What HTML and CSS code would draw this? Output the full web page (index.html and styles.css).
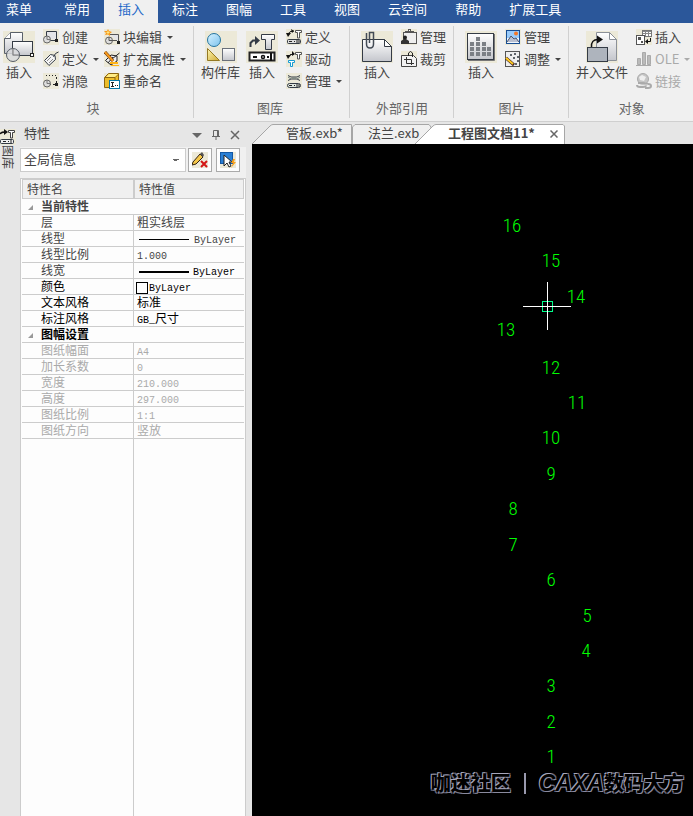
FILE: index.html
```html
<!DOCTYPE html>
<html lang="zh-CN">
<head>
<meta charset="utf-8">
<title>工程图文档11</title>
<link rel="stylesheet" href="styles.css">
</head>
<body>
<nav class="menu">
  <button class="menu-item menu-root">菜单</button>
  <button class="menu-item">常用</button>
  <button class="menu-item active">插入</button>
  <button class="menu-item">标注</button>
  <button class="menu-item">图幅</button>
  <button class="menu-item">工具</button>
  <button class="menu-item">视图</button>
  <button class="menu-item">云空间</button>
  <button class="menu-item">帮助</button>
  <button class="menu-item">扩展工具</button>
</nav>

<div class="ribbon">
  <section class="group group-first">
    <div class="tools">
      <button class="big">
        <svg width="32" height="32" viewBox="0 0 32 32"><defs><linearGradient id="g" x1="0" y1="0" x2="0" y2="1"><stop offset="0" stop-color="#fff"/><stop offset="1" stop-color="#c4c6cc"/></linearGradient></defs><rect width="32" height="32" fill="#ece9d8"/><path d="M1.500 22.500V7.500L7.500 1.500H19.500V22.500Z" fill="url(#g)" stroke="#5a616a"/><path d="M1.500 7.500H7.500V1.500" fill="#fff" stroke="#5a616a"/><rect x="9.500" y="10.500" width="20" height="14" fill="url(#g)" stroke="#343b45"/><circle cx="10" cy="24" r="6.500" fill="#d9dadd" fill-opacity=".85" stroke="#555c66"/><path d="M10 17v7h6" fill="none" stroke="#777"/><rect x="27.500" y="22.500" width="3" height="3" fill="#fff" stroke="#222"/></svg>
        <span>插入</span>
      </button>
      <div class="col">
        <button class="small"><svg width="16" height="16" viewBox="0 0 16 16"><rect width="16" height="16" fill="#ece9d8"/><path d="M3.500 9V2.500H13.500V11" fill="#e4e5e8" stroke="#343b45"/><path d="M7 11.500H12" stroke="#343b45"/><circle cx="4" cy="10.500" r="3.500" fill="#ddd" stroke="#666"/><path d="M4 7v3.500h3" stroke="#777" fill="none"/><rect x="12" y="10" width="3" height="3" fill="#222"/></svg>创建</button>
        <button class="small"><svg width="16" height="16" viewBox="0 0 16 16"><rect width="16" height="16" fill="#ece9d8"/><path d="M1.500 9.500L7.500 3.500L12 4.500L12.500 8.500L6 14.500Z" fill="#f5f5f5" stroke="#343b45"/><path d="M4 10l4-4M6 12l4-4" stroke="#888"/><path d="M10.500 6Q12 1.500 15.500 1" fill="none" stroke="#343b45"/></svg>定义<i class="arrow"></i></button>
        <button class="small"><svg width="16" height="16" viewBox="0 0 16 16"><rect width="16" height="16" fill="#ece9d8"/><path d="M3 2.500H14" stroke="#222" stroke-dasharray="1 2"/><path d="M13.500 4V10M6 11.500H12" stroke="#222" stroke-dasharray="2 2"/><circle cx="4" cy="10.500" r="3.500" fill="#ddd" stroke="#666"/><path d="M4 7v3.500h3" stroke="#777" fill="none"/><rect x="12" y="10" width="3" height="3" fill="#222"/></svg>消隐</button>
      </div>
      <div class="col">
        <button class="small"><svg width="16" height="16" viewBox="0 0 16 16"><rect width="16" height="16" fill="#ece9d8"/><path d="M6 5.500H14.500V13" fill="#e4e5e8" stroke="#555"/><circle cx="5" cy="11.500" r="3.500" fill="#ddd" stroke="#666"/><path d="M5 8v3.500h8" fill="none" stroke="#555"/><path d="M4 0L5 2L8 3L6 4.500L6 7L4 5.500L1 6L2 4L0 2L3 2Z" fill="#f79a1b"/><path d="M4 2v3M2.500 3.500h3" stroke="#ffe682"/><rect x="13" y="12" width="3" height="3" fill="#222"/></svg>块编辑<i class="arrow"></i></button>
        <button class="small"><svg width="16" height="16" viewBox="0 0 16 16"><rect width="16" height="16" fill="#ece9d8"/><path d="M1.500 9.500L7 4L13 5L13 10L7 14Z" fill="#eee" stroke="#222"/><path d="M8 8L15.500 2M4 12L9 6" stroke="#222"/><path d="M1 1L9 10" stroke="#69320a" stroke-width="3"/><path d="M1 1L9 10" stroke="#f79a1b" stroke-width="2"/><path d="M6 11h8v2h-8zM7 14h8v1h-8z" fill="#ffb315"/></svg>扩充属性<i class="arrow"></i></button>
        <button class="small"><svg width="16" height="16" viewBox="0 0 16 16"><rect width="16" height="16" fill="#ece9d8"/><path d="M.5 4.500L4.500.5H14.500V10L11 14.500H.5Z" fill="#edbd2a" stroke="#8d6610"/><path d="M1 4.500H11V14M11 4.500L14.500 1" fill="none" stroke="#8d6610"/><path d="M2 4L5 1H14L11 4Z" fill="#ffec85"/><rect x="5.500" y="7.500" width="10" height="8" fill="#fff" stroke="#0877a6"/><path d="M7 9.500h3M8.500 9.500v4M7 13.500h3M11 12.500h1M13 12.500h1" stroke="#222" fill="none"/></svg>重命名</button>
      </div>
    </div>
    <h2>块</h2>
  </section>

  <section class="group group-library">
    <div class="tools">
      <button class="big">
        <svg width="32" height="32" viewBox="0 0 32 32"><defs><linearGradient id="blue" x1="0" y1="0" x2="1" y2="1"><stop offset="0" stop-color="#d9f3ff"/><stop offset="1" stop-color="#7cc2ed"/></linearGradient><linearGradient id="gold" x1="0" y1="0" x2="1" y2="1"><stop offset="0" stop-color="#fff7ae"/><stop offset="1" stop-color="#cfaa38"/></linearGradient></defs><rect width="32" height="32" fill="#ece9d8"/><circle cx="9" cy="9" r="6.500" fill="url(#blue)" stroke="#27759f"/><path d="M2.500 17.500V29.500H14.500Z" fill="url(#gold)" stroke="#957923"/><rect x="17.500" y="17.500" width="12" height="12" fill="url(#g)" stroke="#6a707a"/></svg>
        <span>构件库</span>
      </button>
      <button class="big">
        <svg width="32" height="32" viewBox="0 0 32 32"><rect width="32" height="32" fill="#ece9d8"/><path d="M4.500 16V12L7 9.500H11" fill="none" stroke="#343b45" stroke-width="2"/><path d="M9 5L14 9.500L9 14Z" fill="#343b45"/><path d="M15.500 3.500H28.500V8.500H25.500V18.500H19.500V8.500H15.500Z" fill="url(#g)" stroke="#343b45"/><rect x="3.500" y="21.500" width="25" height="8" fill="#fff" stroke="#222" stroke-width="2"/><path d="M7 26h4M21 26h2" stroke="#111" stroke-width="2"/><circle cx="17" cy="26" r="1.500" fill="none" stroke="#111" stroke-width="1.500"/><path d="M25 22v8" stroke="#111" stroke-width="2"/></svg>
        <span>插入</span>
      </button>
      <div class="col">
        <button class="small"><svg width="16" height="16" viewBox="0 0 16 16"><rect width="16" height="16" fill="#ece9d8"/><path d="M2 5Q3 2 8 2" fill="none" stroke="#111" stroke-width="1"/><path d="M0 4h5L2 8ZM5 0L8 2L6 4Z" fill="#111"/><path d="M9.500 1.500H15.500V3.500H13.500V9H11.500V3.500H9.500Z" fill="#fff" stroke="#555"/><rect x="1.500" y="10.500" width="13" height="4" rx="1" fill="#ddd" stroke="#343b45"/><path d="M3 12.500h3M8 12.500h1M11 11v3M13 11v3" stroke="#222"/></svg>定义</button>
        <button class="small"><svg width="16" height="16" viewBox="0 0 16 16"><rect width="16" height="16" fill="#ece9d8"/><path d="M2 6Q3 3 8 3" fill="none" stroke="#111"/><path d="M0 4h5L2 8ZM6 0L9 3L6 5Z" fill="#111"/><path d="M9.500 1.500H15.500V3.500H13.500V8H11.500V3.500H9.500Z" fill="#fff" stroke="#555"/><path d="M2.500 9.500H8.500V11.500H6.500V15.500H4.500V11.500H2.500Z" fill="#fff" stroke="#159bd2"/></svg>驱动</button>
        <button class="small"><svg width="16" height="16" viewBox="0 0 16 16"><rect width="16" height="16" fill="#ece9d8"/><path d="M2 2.500L5 4L11 4L14 2.500M2 7.500L5 6H11L14 7.500" fill="none" stroke="#343b45" stroke-width="1"/><path d="M2 4L5 6M14 4L11 6M6 5h4" stroke="#718078"/><rect x="1.500" y="10.500" width="13" height="4" rx="2" fill="#dfe6df" stroke="#343b45"/><path d="M3 12.500h3M8 12.500h1M11 11v3M13 11v3" stroke="#222"/></svg>管理<i class="arrow"></i></button>
      </div>
    </div>
    <h2>图库</h2>
  </section>

  <section class="group group-reference">
    <div class="tools">
      <button class="big">
        <svg width="32" height="32" viewBox="0 0 32 32"><rect width="32" height="32" fill="#ece9d8"/><path d="M1.500 8.500H23.500L30.500 15.500V30.500H1.500Z" fill="url(#g)" stroke="#343b45"/><path d="M23.500 8.500V15.500H30.500Z" fill="#fff" stroke="#343b45"/><path d="M5.500 2V13Q5.500 17 9 17Q12.500 17 12.500 13V1.500H8.500V12" fill="none" stroke="#444c56" stroke-width="1.500"/></svg>
        <span>插入</span>
      </button>
      <div class="col">
        <button class="small"><svg width="16" height="16" viewBox="0 0 16 16"><rect width="16" height="16" fill="#ece9d8"/><rect x="2.500" y="3.500" width="13" height="11" fill="#eee" stroke="#555"/><path d="M4 4h9V2h-3V0H7v2H4Z" fill="#555"/><rect x="8" y="1" width="1" height="1" fill="#fff"/><circle cx="4" cy="8.500" r="2" fill="#222"/><path d="M0 15v-3l3-2h2l3 2v3Z" fill="#333"/></svg>管理</button>
        <button class="small"><svg width="16" height="16" viewBox="0 0 16 16"><rect width="16" height="16" fill="#ece9d8"/><path d="M.5 4.500H12.500L15.500 7.500V15.500H.5Z" fill="#f2f2f2" stroke="#444"/><path d="M7.500 5V2Q9.500-1 11.500 2V6" fill="none" stroke="#222"/><path d="M5.500 6V12.500H13M3 8.500H10.500V14" fill="none" stroke="#333"/></svg>裁剪</button>
      </div>
    </div>
    <h2>外部引用</h2>
  </section>

  <section class="group group-image">
    <div class="tools">
      <button class="big">
        <svg width="32" height="32" viewBox="0 0 32 32"><rect width="32" height="32" fill="#ece9d8"/><rect x="2.500" y="2.500" width="26" height="26" fill="url(#g)" stroke="#343b45" stroke-width="1"/><path d="M3 29.500H29.500V3" fill="none" stroke="#777"/><g fill="#7b7f85"><path d="M11 6h4v4h-4zM5 11h4v4h-4zM11 11h4v4h-4zM17 11h4v4h-4zM5 16h4v4h-4zM11 16h4v4h-4zM17 16h4v4h-4zM22 16h4v4h-4zM5 21h4v4h-4zM11 21h4v4h-4zM17 21h4v4h-4zM22 21h4v4h-4z"/></g></svg>
        <span>插入</span>
      </button>
      <div class="col">
        <button class="small"><svg width="16" height="16" viewBox="0 0 16 16"><rect width="16" height="16" fill="#ece9d8"/><rect x="1.500" y="1.500" width="13" height="13" fill="#9acbfa" stroke="#174d93"/><path d="M2 9h12v5H2Z" fill="#eff7ff"/><path d="M2 13L6 7L9 10L11 9L14 13" fill="#b9bfd0" stroke="#4b536c"/><circle cx="11" cy="4.500" r="2" fill="#f57727"/></svg>管理</button>
        <button class="small"><svg width="16" height="16" viewBox="0 0 16 16"><rect x=".5" y=".5" width="14" height="15" fill="#eee" stroke="#555"/><path d="M5 3h2v2H5zM9 2h2v2H9zM12 5h2v2h-2zM8 6h2v2H8zM12 9h2v2h-2zM10 12h2v2h-2z" fill="#60646a"/><path d="M1 7L9 14" stroke="#422" stroke-width="3"/><path d="M1 7L8 13" stroke="#ffcb20" stroke-width="2"/></svg>调整<i class="arrow"></i></button>
      </div>
    </div>
    <h2>图片</h2>
  </section>

  <section class="group group-object">
    <div class="tools">
      <button class="big">
        <svg width="32" height="32" viewBox="0 0 32 32"><rect width="32" height="32" fill="#ece9d8"/><path d="M10.500 1.500H23.500L30.500 8.500V29.500H10.500Z" fill="url(#g)" stroke="#8b9098"/><path d="M23.500 1.500V8.500H30.500Z" fill="#fff" stroke="#8b9098"/><rect x="1.500" y="16.500" width="20" height="14" fill="#aeb4bd" stroke="#343b45"/><path d="M5.500 16Q5 8.500 12 8.500" fill="none" stroke="#111" stroke-width="1.500"/><path d="M11 4.500L17 8.500L11 12.500Z" fill="#111"/></svg>
        <span>并入文件</span>
      </button>
      <div class="col">
        <button class="small"><svg width="16" height="16" viewBox="0 0 16 16"><rect width="16" height="16" fill="#ece9d8"/><rect x="6.500" y="1.500" width="9" height="6" fill="#fff" stroke="#777"/><path d="M7 2.500h8M9.500 2v5M12.500 2v5M7 4.500h8" stroke="#888"/><rect x=".5" y="6.500" width="8" height="9" fill="#fff" stroke="#555"/><path d="M2 8h3v3H2zM5 12h2v2H5z" fill="#555"/><path d="M14.500 9V12.500H11" fill="none" stroke="#111" stroke-width="1"/><path d="M12 10v5L9 12.500Z" fill="#111"/></svg>插入</button>
        <button class="small" disabled><svg width="16" height="16" viewBox="0 0 16 16"><path d="M1.500 7.500h3v6h-3zM6.500 1.500h3v12h-3zM11.500 4.500h3v9h-3z" fill="#bbb" stroke="#aaa"/><path d="M0 14.500h15" stroke="#aaa"/></svg>OLE<i class="arrow"></i></button>
        <button class="small" disabled><svg width="16" height="16" viewBox="0 0 16 16"><circle cx="7" cy="6" r="5.500" fill="#c5c5c5" stroke="#aaa"/><path d="M3 4l3-2l4 2l-2 4L4 7ZM8 9l4-3" fill="#eee"/><path d="M2 10h5q3 0 3 2t-3 2H4q-3 0-3-2M8 11h4q3 0 3 2t-3 2H9" fill="none" stroke="#aaa" stroke-width="2"/><path d="M4 12h8" stroke="#ddd"/></svg>链接</button>
      </div>
    </div>
    <h2>对象</h2>
  </section>
</div>

<main class="workspace">
  <aside class="dock">
    <svg width="16" height="16" viewBox="0 0 16 16"><rect width="16" height="16" fill="#ece9d8"/><path d="M0 5Q1 3 5 3" fill="none" stroke="#111" stroke-width="1.500"/><path d="M4 0L8 3L4 6Z" fill="#111"/><path d="M8.500 1.500H14.500V3.500H12.500V9H10.500V3.500H8.500Z" fill="#fff" stroke="#444"/><rect x=".5" y="10.500" width="13" height="4" rx="1" fill="#eee" stroke="#343b45"/><path d="M3 12.500h3M8 12.500h1M11 11v3" stroke="#222"/></svg>
    <button class="dock-label">图库</button>
  </aside>

  <section class="panel">
    <header class="panel-head">
      <h1>特性</h1>
      <button class="tool" aria-label="选项"><svg width="10" height="10" viewBox="0 0 10 10"><path d="M0 3H10L5 8Z" fill="#666"/></svg></button>
      <button class="tool" aria-label="固定"><svg width="10" height="10" viewBox="0 0 10 10"><path d="M2.500 6V.5H7.500V6M1 6.500H9M5 7V10M6.500 1V6" fill="none" stroke="#666"/></svg></button>
      <button class="tool" aria-label="关闭面板"><svg width="10" height="10" viewBox="0 0 10 10"><path d="M1 1L9 9M9 1L1 9" stroke="#666" stroke-width="1.500"/></svg></button>
    </header>
    <div class="filter">
      <select aria-label="对象选择"><option>全局信息</option></select>
      <button class="square" aria-label="清除选择"><svg width="16" height="16" viewBox="0 0 16 16"><rect width="16" height="16" fill="#ece9d8"/><path d="M1 10L8 2L11 5L4 12L0 13Z" fill="#f5c748" stroke="#332211"/><path d="M8 2L10 0L12 3L11 5Z" fill="#555"/><path d="M9 9L15 15M15 9L9 15" stroke="#d31616" stroke-width="2"/></svg></button>
      <button class="square" aria-label="快速选择"><svg width="16" height="16" viewBox="0 0 16 16"><rect width="16" height="16" fill="#ece9d8"/><rect x=".5" y=".5" width="12" height="11" fill="#2a7fd4" stroke="#1458a4"/><path d="M4 3V14L7 11L9 15L11 14L9 10H12Z" fill="#fff" stroke="#222"/><path d="M13 7L11 11H13L11 16L16 10H14L15 7Z" fill="#f9a11c"/></svg></button>
    </div>
    <div class="grid">
      <table>
        <colgroup><col class="name-col"><col></colgroup>
        <thead><tr><th>特性名</th><th>特性值</th></tr></thead>
        <tbody class="current">
          <tr class="section"><th colspan="2">当前特性</th></tr>
          <tr><td>层</td><td>粗实线层</td></tr>
          <tr><td>线型</td><td><span class="line"></span><span class="latin">ByLayer</span></td></tr>
          <tr><td>线型比例</td><td><span class="latin">1.000</span></td></tr>
          <tr><td>线宽</td><td class="dark"><span class="line thick"></span><span class="latin">ByLayer</span></td></tr>
          <tr class="dark"><td>颜色</td><td class="color"><span class="swatch"></span><span class="latin">ByLayer</span></td></tr>
          <tr class="dark"><td>文本风格</td><td>标准</td></tr>
          <tr class="dark"><td>标注风格</td><td><span class="latin">GB_</span>尺寸</td></tr>
          <tr class="section dark"><th colspan="2">图幅设置</th></tr>
        </tbody>
        <tbody class="sheet">
          <tr><td>图纸幅面</td><td><span class="latin">A4</span></td></tr>
          <tr><td>加长系数</td><td><span class="latin">0</span></td></tr>
          <tr><td>宽度</td><td><span class="latin">210.000</span></td></tr>
          <tr><td>高度</td><td><span class="latin">297.000</span></td></tr>
          <tr><td>图纸比例</td><td><span class="latin">1:1</span></td></tr>
          <tr><td>图纸方向</td><td>竖放</td></tr>
        </tbody>
      </table>
      <div class="rest"></div>
    </div>
  </section>

  <section class="document">
    <div class="tabs">
      <button class="tab slanted"><svg class="shape" width="101" height="20" viewBox="0 0 101 20"><path d="M0 20L18 2Q19.500.5 21 .5H99.500V20" fill="#f0f0f0" stroke="#a6a6a6"/></svg><span>管板.exb*</span></button>
      <button class="tab plain"><svg class="shape" width="82" height="20" viewBox="0 0 82 20"><path d="M.5 20V3L3 .5H77L79 3V20" fill="#f0f0f0" stroke="#a6a6a6"/></svg><span>法兰.exb</span></button>
      <div class="tab current-tab"><svg class="shape" width="151" height="20" viewBox="0 0 151 20"><path d="M0 20L18 2Q19.500.5 21 .5H148L149.500 2V20" fill="#fff" stroke="#a6a6a6"/></svg><button class="tab-name">工程图文档11*</button><button class="close" aria-label="关闭文档"><svg width="8" height="8" viewBox="0 0 8 8"><path d="M.5.5L7.500 7.500M7.500.5L.5 7.500" stroke="#666" stroke-width="1.500"/></svg></button></div>
    </div>
    <div class="canvas">
      <svg class="drawing">
        <g class="numbers">
          <text x="260" y="88">16</text>
          <text x="299" y="123">15</text>
          <text x="324" y="159">14</text>
          <text x="254" y="192">13</text>
          <text x="299" y="230">12</text>
          <text x="325" y="265">11</text>
          <text x="299" y="300">10</text>
          <text x="299" y="336">9</text>
          <text x="261" y="371">8</text>
          <text x="261" y="407">7</text>
          <text x="299" y="442">6</text>
          <text x="335" y="478">5</text>
          <text x="334" y="513">4</text>
          <text x="299" y="548">3</text>
          <text x="299" y="584">2</text>
          <text x="299" y="619">1</text>
        </g>
        <rect x="290.500" y="157.500" width="10" height="10" fill="none" stroke="#00ff8c"/>
        <path d="M271 162.500H319M295.500 138V186" stroke="#fff"/>
      </svg>
      <p class="mark">咖迷社区<span class="bar"></span><em>CAXA</em>数码大方</p>
    </div>
  </section>
</main>
</body>
</html>
```

FILE: styles.css
```css
* {
  box-sizing: border-box;
}

body {
  margin: 0;
  min-height: 100vh;
  display: flex;
  flex-direction: column;
  background: #e6e6e6;
  color: #444;
  font: 13px/18px "Noto Sans CJK SC", sans-serif;
}

button {
  margin: 0;
  padding: 0;
  border: 0;
  background: none;
  color: inherit;
  font: inherit;
  white-space: nowrap;
}

svg {
  display: block;
  flex: none;
}

h1,
h2,
p {
  margin: 0;
  font-size: 13px;
  font-weight: 400;
}

/* Menu bar */
.menu {
  display: flex;
  height: 23px;
  background: #2b579a;
  color: #fff;
}

.menu-item {
  padding: 0 14px 5px;
  line-height: 16px;
}

.menu-root {
  padding: 0 18px 5px 6px;
}

.menu-item.active {
  background: #f0f0f0;
  color: #1e68c8;
}

/* Ribbon */
.ribbon {
  display: flex;
  height: 99px;
  padding: 3px 0;
  background: #f0f0f0;
  border-bottom: 1px solid #cfcfcf;
}

.group {
  display: flex;
  flex-direction: column;
  justify-content: space-between;
  padding: 2px 7px 1px 8px;
  border-right: 1px solid #d0d0d0;
}

.group-first {
  padding-left: 0;
}

.group-library {
  padding-left: 4px;
}

.group-object {
  padding-left: 4px;
}

.group h2 {
  color: #666;
  text-align: center;
}

.tools {
  display: flex;
}

.big {
  display: flex;
  flex-direction: column;
  align-items: center;
  padding: 3px 3px 0;
}

.col {
  display: flex;
  flex-direction: column;
  gap: 4px;
  margin-left: 5px;
}

.small {
  display: flex;
  align-items: center;
  gap: 3px;
  height: 18px;
}

.small:disabled {
  color: #aaa;
}

.arrow {
  margin-left: 2px;
  border: 3px solid transparent;
  border-top-color: currentColor;
  border-bottom: 0;
}

/* Workspace */
.workspace {
  display: flex;
  flex: 1;
}

.dock {
  width: 20px;
  padding-top: 7px;
}

.dock-label {
  width: 16px;
  writing-mode: vertical-rl;
  text-orientation: sideways;
  font-size: 12px;
  line-height: 16px;
}

.panel {
  display: flex;
  flex-direction: column;
  width: 226px;
}

.panel-head {
  display: flex;
  align-items: center;
  gap: 9px;
  height: 25px;
  padding: 0 6px 0 4px;
}

.panel-head h1 {
  flex: 1;
  padding-bottom: 3px;
}

.filter {
  display: flex;
  gap: 4px;
  height: 31px;
  padding: 1px 6px 6px 0;
  background: #f0f0f0;
}

.filter select {
  flex: 1;
  min-width: 0;
  margin-right: -2px;
  padding: 0 3px 2px;
  border: 1px solid #ccc;
  border-radius: 0;
  appearance: none;
  background-color: #fff;
  color: #444;
  font: inherit;
  background-image:
    linear-gradient(45deg, transparent 50%, #666 50%),
    linear-gradient(315deg, transparent 50%, #666 50%);
  background-size: 3px 3px;
  background-position: right 9px center, right 6px center;
  background-repeat: no-repeat;
}

.square {
  display: grid;
  place-items: center;
  width: 24px;
  border: 1px solid #aaa;
  background: #fdfdfd;
}

/* Property grid */
.grid {
  display: flex;
  flex: 1;
  flex-direction: column;
  padding: 0 1px;
  background: #fdfdfd;
  border: 1px solid #ccc;
  border-bottom: 0;
}

table {
  width: 100%;
  table-layout: fixed;
  border-collapse: separate;
  border-spacing: 0;
  font-size: 12px;
  line-height: 14px;
}

.name-col {
  width: 112px;
}

th,
td {
  height: 16px;
  padding: 0 0 1px 3px;
  border-bottom: 1px solid #ccc;
  text-align: left;
  white-space: nowrap;
}

thead th {
  height: 20px;
  padding-left: 4px;
  border: 1px solid #ccc;
  background: #f0f0f0;
  font-weight: 400;
}

td:first-child,
.section th {
  padding-left: 19px;
}

td:first-child {
  border-right: 1px solid #ccc;
}

.section th::before {
  content: "";
  float: left;
  width: 0;
  height: 0;
  margin: 6px 0 0 -13px;
  border-bottom: 5px solid #999;
  border-left: 5px solid transparent;
}

.latin {
  font: 10px/1px "Liberation Mono", monospace;
}

.line {
  display: inline-block;
  width: 50px;
  height: 1px;
  margin: 0 5px 0 2px;
  vertical-align: middle;
  background: #000;
}

.line.thick {
  height: 2px;
  margin-right: 4px;
}

td.color {
  padding-left: 2px;
}

.swatch {
  display: inline-block;
  width: 12px;
  height: 12px;
  margin: -2px 1px -2px 0;
  border: 1px solid #000;
  vertical-align: middle;
}

.dark {
  color: #000;
}

.sheet {
  color: #aaa;
}

.rest {
  flex: 1;
  width: 112px;
  border-right: 1px solid #ccc;
}

/* Documents */
.document {
  display: flex;
  flex: 1;
  flex-direction: column;
  min-width: 0;
  margin-left: 6px;
}

.tabs {
  display: flex;
  height: 22px;
  padding-top: 2px;
}

.tab {
  position: relative;
  display: flex;
  align-items: center;
  height: 20px;
}

.shape {
  position: absolute;
  top: 0;
  left: 0;
}

.tab span,
.tab-name,
.close {
  position: relative;
}

.tab span,
.tab-name {
  padding-bottom: 2px;
}

.slanted {
  width: 100px;
  padding-left: 34px;
}

.plain {
  width: 63px;
  padding-left: 16px;
}

.current-tab {
  width: 150px;
  padding-left: 33px;
  justify-content: space-between;
  padding-right: 7px;
}

.tab-name {
  font-weight: 700;
}

.canvas {
  position: relative;
  flex: 1;
  background: #000;
}

.drawing {
  position: absolute;
  width: 100%;
  height: 100%;
  shape-rendering: crispEdges;
}

.numbers {
  fill: #0f0;
  font: 300 19px "Roboto Condensed", "Liberation Sans Narrow", "Liberation Sans", sans-serif;
  text-anchor: middle;
}

.mark {
  position: absolute;
  right: 9px;
  bottom: 20px;
  display: flex;
  align-items: center;
  color: #000;
  font-size: 20px;
  font-weight: 900;
  line-height: 26px;
  text-shadow: -1px -1px #a6a6ba, 1px 1px #8a8a9e, 1px -1px #66667a, -1px 1px #66667a;
}

.mark em {
  font: italic 700 23px/26px "Liberation Sans", sans-serif;
}

.bar {
  width: 2px;
  height: 21px;
  margin: 0 13px;
  background: #9999ad;
}
```
